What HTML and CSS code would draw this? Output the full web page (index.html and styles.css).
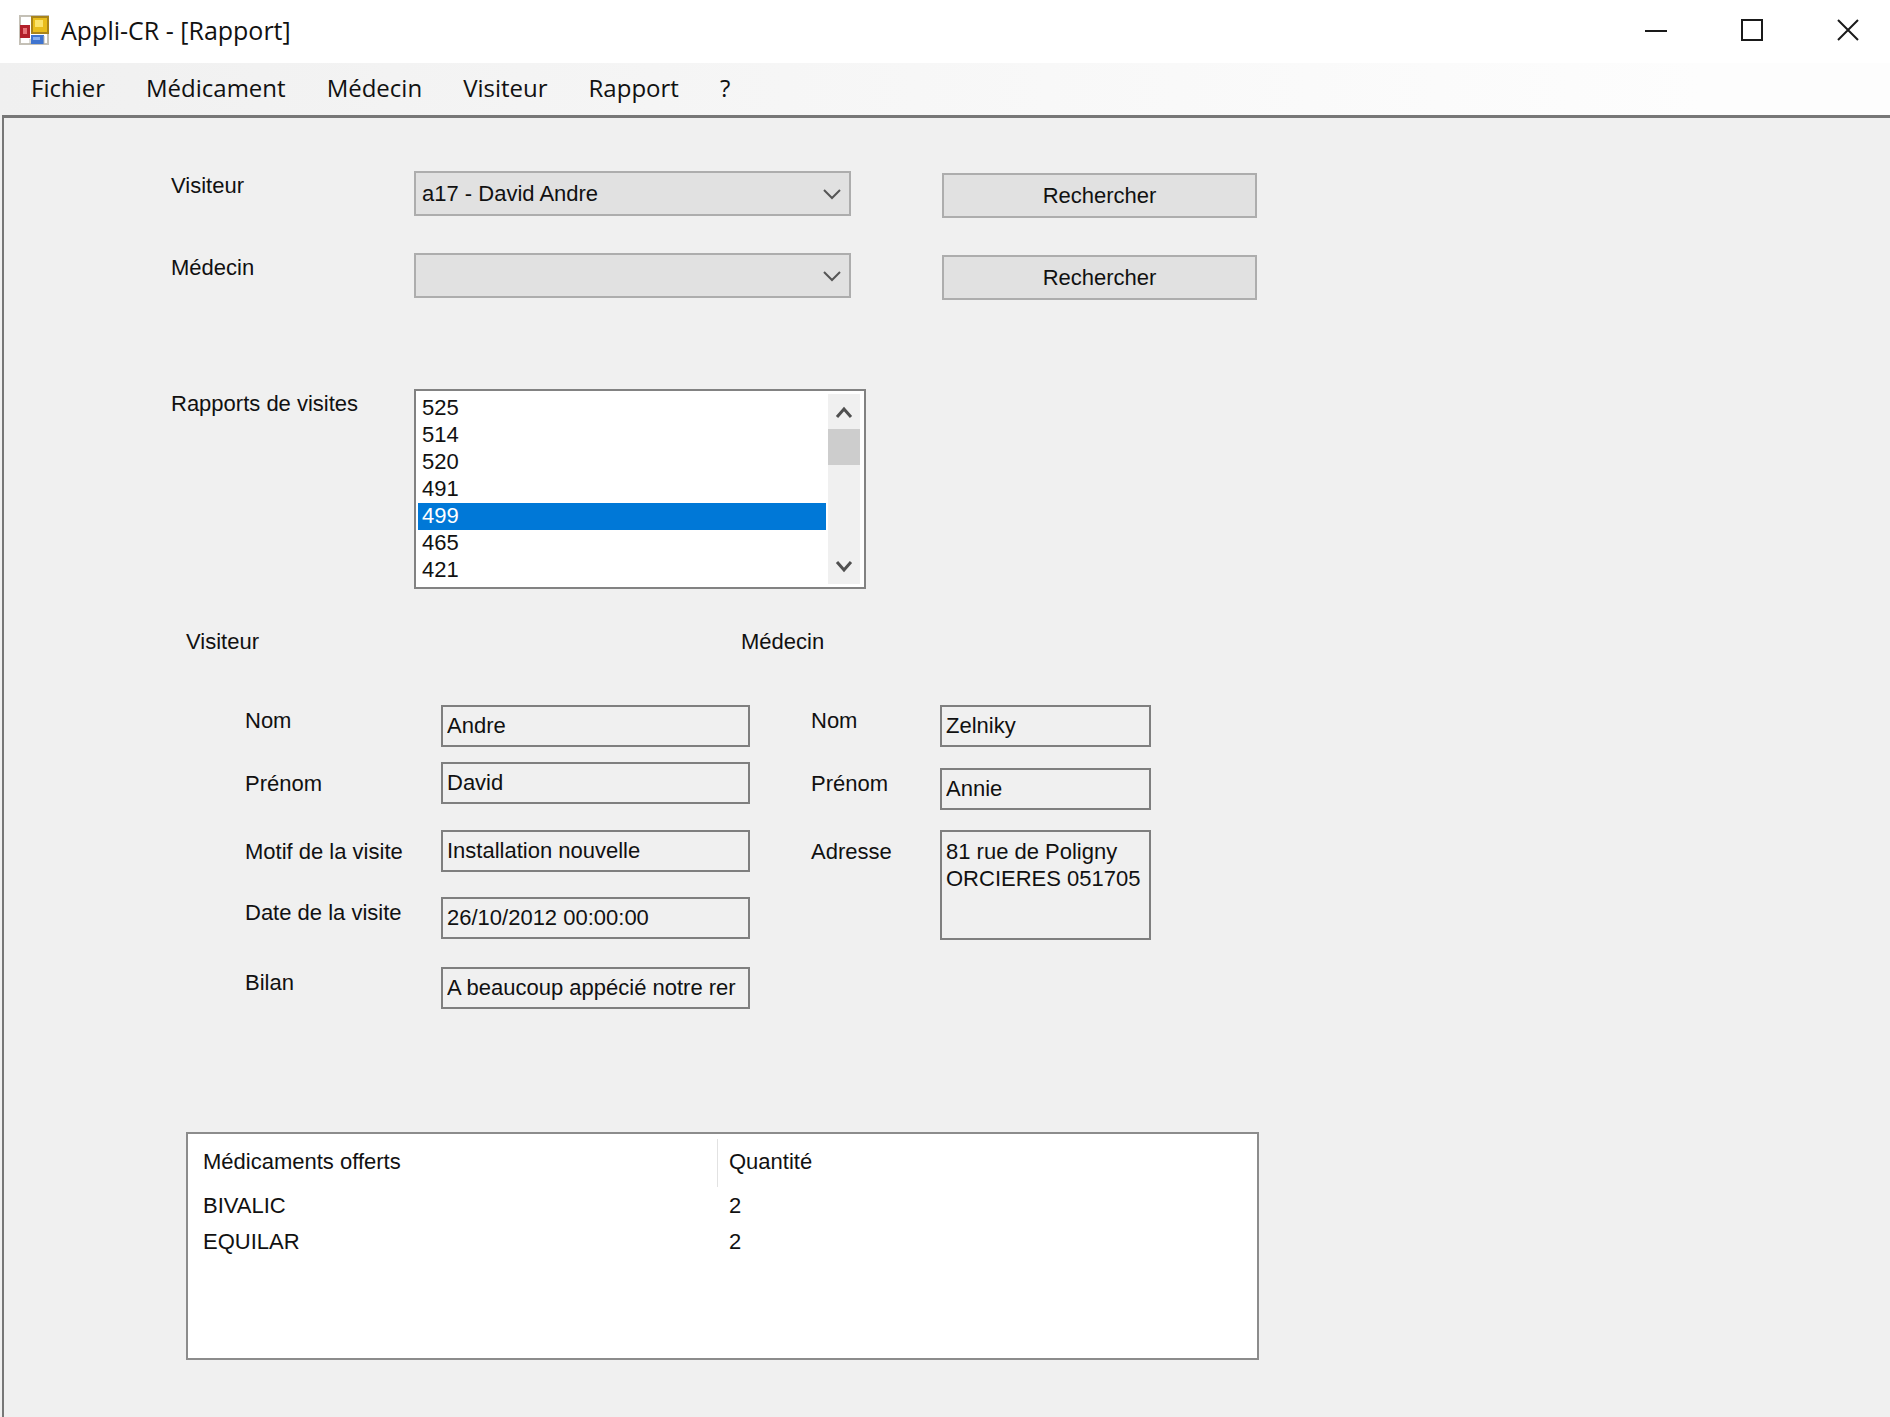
FILE: index.html
```html
<!DOCTYPE html>
<html lang="fr">
<head>
<meta charset="utf-8">
<title>Appli-CR - [Rapport]</title>
<link rel="stylesheet" href="styles.css">
</head>
<body>
<header class="titlebar">
  <svg class="titlebar__icon" viewBox="0 0 30 30" aria-hidden="true">
    <rect x="1" y="1" width="28" height="28" fill="#fff" stroke="#c4c0b6" stroke-width="2"/>
    <rect x="1" y="10" width="10" height="13" fill="#b3202a"/>
    <rect x="4" y="13" width="4" height="6" fill="#e8747a"/>
    <rect x="13" y="2" width="16" height="16" fill="#e9bd1c" stroke="#a9841a" stroke-width="2"/>
    <rect x="16" y="5" width="8" height="7" fill="#fbe36b"/>
    <rect x="12" y="20" width="13" height="9" fill="#3f74cf"/>
    <rect x="14" y="22" width="7" height="3" fill="#86aef0"/>
    <path d="M11 24v5M25 21v8" stroke="#b9b4a8" stroke-width="1"/>
  </svg>
  <h1 class="titlebar__title">Appli-CR - [Rapport]</h1>
  <div class="titlebar__controls">
    <button class="winbtn" type="button" aria-label="Réduire"><svg viewBox="0 0 22 22"><path d="M0 12h22"/></svg></button>
    <button class="winbtn" type="button" aria-label="Agrandir"><svg viewBox="0 0 22 22"><path d="M1 1h20v20H1z"/></svg></button>
    <button class="winbtn" type="button" aria-label="Fermer"><svg viewBox="0 0 22 22"><path d="M1 1l20 20M21 1L1 21"/></svg></button>
  </div>
</header>

<nav class="menubar">
  <a href="#">Fichier</a>
  <a href="#">Médicament</a>
  <a href="#">Médecin</a>
  <a href="#">Visiteur</a>
  <a href="#">Rapport</a>
  <a href="#">?</a>
</nav>

<main class="workspace">
  <form class="search">
    <label class="search__label" for="visiteur">Visiteur</label>
    <div class="combo">
      <select id="visiteur"><option>a17 - David Andre</option></select>
      <svg class="combo__arrow" viewBox="0 0 18 11" aria-hidden="true"><path d="M1 1l8 8 8-8"/></svg>
    </div>
    <button class="btn" type="button">Rechercher</button>

    <label class="search__label" for="medecin">Médecin</label>
    <div class="combo">
      <select id="medecin"><option></option></select>
      <svg class="combo__arrow" viewBox="0 0 18 11" aria-hidden="true"><path d="M1 1l8 8 8-8"/></svg>
    </div>
    <button class="btn" type="button">Rechercher</button>
  </form>

  <div class="reports">
    <label class="search__label" for="rapports">Rapports de visites</label>
    <div class="listbox">
      <select id="rapports" size="7">
        <option>525</option>
        <option>514</option>
        <option>520</option>
        <option>491</option>
        <option selected>499</option>
        <option>465</option>
        <option>421</option>
      </select>
      <div class="scrollbar">
        <button type="button" aria-label="Défiler vers le haut"><svg viewBox="0 0 18 14"><path d="M2 12l7-8 7 8"/></svg></button>
        <div class="scrollbar__track"><div class="scrollbar__thumb"></div></div>
        <button type="button" aria-label="Défiler vers le bas"><svg viewBox="0 0 18 14"><path d="M2 2l7 8 7-8"/></svg></button>
      </div>
    </div>
  </div>

  <div class="details">
    <section>
      <h2 class="details__title">Visiteur</h2>
      <div class="fields fields--visitor">
        <label for="v-nom">Nom</label>
        <input id="v-nom" type="text" value="Andre" readonly>
        <label class="middle" for="v-prenom">Prénom</label>
        <input id="v-prenom" type="text" value="David" readonly>
        <label class="middle" for="v-motif">Motif de la visite</label>
        <input id="v-motif" type="text" value="Installation nouvelle" readonly>
        <label for="v-date">Date de la visite</label>
        <input id="v-date" type="text" value="26/10/2012 00:00:00" readonly>
        <label for="v-bilan">Bilan</label>
        <input id="v-bilan" type="text" value="A beaucoup appécié notre rer" readonly>
      </div>
    </section>
    <section>
      <h2 class="details__title">Médecin</h2>
      <div class="fields fields--doctor">
        <label for="m-nom">Nom</label>
        <input id="m-nom" type="text" value="Zelniky" readonly>
        <label for="m-prenom">Prénom</label>
        <input id="m-prenom" type="text" value="Annie" readonly>
        <label class="middle" for="m-adresse">Adresse</label>
        <textarea id="m-adresse" readonly>81 rue de Poligny
ORCIERES 051705</textarea>
      </div>
    </section>
  </div>

  <div class="listview">
    <table>
      <thead>
        <tr><th scope="col"><div>Médicaments offerts</div></th><th scope="col"><div>Quantité</div></th></tr>
      </thead>
      <tbody>
        <tr><td>BIVALIC</td><td>2</td></tr>
        <tr><td>EQUILAR</td><td>2</td></tr>
      </tbody>
    </table>
  </div>
</main>
</body>
</html>
```
FILE: styles.css
```css
*, *::before, *::after { box-sizing: border-box; }

html, body { height: 100%; }

body {
  margin: 0;
  display: flex;
  flex-direction: column;
  background: #f0f0f0;
  color: #111;
  font: 22px/27px "Liberation Sans", Arial, sans-serif;
}

button, input, select, textarea {
  margin: 0;
  font: inherit;
  color: inherit;
  border-radius: 0;
  outline: none;
}

h1, h2 { margin: 0; font-weight: normal; }

svg { display: block; fill: none; }

/* Title bar */
.titlebar {
  display: flex;
  align-items: flex-start;
  flex: none;
  height: 63px;
  padding-left: 19px;
  background: #fff;
}
.titlebar__icon { width: 30px; height: 30px; margin-top: 15px; }
.titlebar__title {
  flex: 1;
  padding-left: 12px;
  font: 25px/60px "Open Sans", "Segoe UI", sans-serif;
}
.titlebar__controls { display: flex; height: 60px; }
.winbtn {
  display: flex;
  align-items: center;
  justify-content: center;
  width: 96px;
  padding: 0;
  border: 0;
  background: none;
}
.winbtn:last-child { width: 84px; margin-left: 6px; }
.winbtn svg { width: 22px; height: 22px; stroke: #1a1a1a; stroke-width: 2; }

/* Menu bar */
.menubar {
  display: flex;
  align-items: flex-start;
  flex: none;
  gap: 41px;
  height: 52px;
  padding-left: 31px;
  background: linear-gradient(to right, #f0f0f0, #fdfdfd 90%);
  font: 24px/50px "Open Sans", "Segoe UI", sans-serif;
}
.menubar a { color: inherit; text-decoration: none; }

/* Work area */
.workspace {
  flex: 1 0 auto;
  margin-left: 2px;
  padding: 53px 0 56px 167px;
  border-top: 3px solid #777;
  border-left: 2px solid #777;
}

.search, .reports {
  display: grid;
  grid-template-columns: 243px 528px 315px;
  align-items: start;
}
.search { grid-auto-rows: 82px; }
.search__label { padding-top: 1px; }

.combo { position: relative; width: 437px; }
.combo select {
  display: block;
  width: 100%;
  height: 45px;
  padding: 0 40px 0 6px;
  appearance: none;
  background: #e1e1e1;
  border: 2px solid #adadad;
}
.combo__arrow {
  position: absolute;
  top: 18px;
  right: 10px;
  width: 18px;
  height: 11px;
  stroke: #555;
  stroke-width: 2;
  pointer-events: none;
}

.btn {
  height: 45px;
  margin-top: 2px;
  padding: 0;
  background: #e1e1e1;
  border: 2px solid #adadad;
}

.reports { margin-top: 54px; }
.listbox {
  display: flex;
  width: 452px;
  height: 200px;
  padding: 3px 4px 3px 2px;
  background: #fff;
  border: 2px solid #828282;
}
.listbox select {
  flex: 1;
  height: 189px;
  margin-top: 1px;
  padding: 0;
  border: 0;
  background: #fff;
  overflow: hidden;
}
.listbox option {
  height: 27px;
  min-height: 27px;
  padding: 0 4px;
  line-height: 27px;
}
.listbox option:checked {
  background: #0078d7 linear-gradient(#0078d7, #0078d7);
  color: #fff;
}
.scrollbar {
  display: flex;
  flex-direction: column;
  width: 32px;
  margin-left: 2px;
  background: #f0f0f0;
}
.scrollbar button {
  display: flex;
  align-items: center;
  justify-content: center;
  height: 35px;
  padding: 0;
  border: 0;
  background: none;
}
.scrollbar svg { width: 18px; height: 14px; stroke: #505050; stroke-width: 3; }
.scrollbar__track { flex: 1; }
.scrollbar__thumb { height: 36px; background: #cdcdcd; }

/* Visit details */
.details { display: flex; margin: 39px 0 0 15px; }
.details section:first-child { width: 555px; }
.details__title { font-size: 22px; line-height: 27px; }
.fields {
  display: grid;
  align-items: start;
  margin-top: 50px;
}
.fields--visitor {
  grid-template-columns: 196px 309px;
  grid-template-rows: 57px 68px 67px 70px 42px;
  padding-left: 59px;
}
.fields--doctor {
  grid-template-columns: 129px 211px;
  grid-template-rows: 63px 62px 110px;
  padding-left: 70px;
}
.fields label { padding-top: 2px; }
.fields label.middle { padding-top: 8px; }
.fields input, .fields textarea {
  display: block;
  width: 100%;
  height: 42px;
  padding: 0 4px;
  background: #f0f0f0;
  border: 2px solid #7f7f7f;
}
.fields textarea {
  height: 110px;
  padding: 6px 4px;
  overflow: hidden;
  resize: none;
}

/* Medicines given */
.listview {
  width: 1073px;
  min-height: 228px;
  margin: 123px 0 0 15px;
  background: #fff;
  border: 2px solid #8c8c8c;
}
.listview table { width: 100%; border-collapse: collapse; table-layout: fixed; }
.listview th { padding: 5px 0 0; font-weight: normal; text-align: left; }
.listview th:first-child { width: 529px; }
.listview th div { height: 48px; padding-left: 15px; line-height: 46px; }
.listview th + th div { padding-left: 11px; border-left: 1px solid #e2e2e2; }
.listview td { height: 36px; padding: 0 0 0 15px; }
.listview td + td { padding-left: 12px; }
```
